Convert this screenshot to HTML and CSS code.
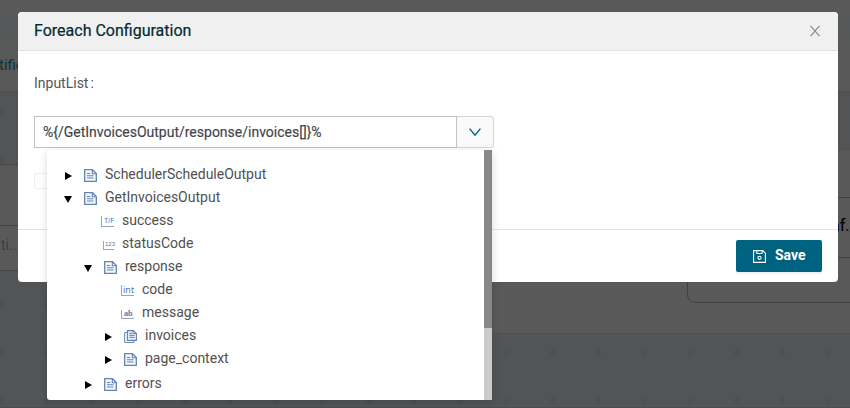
FILE: index.html
```html
<!DOCTYPE html>
<html lang="en">
<head>
<meta charset="utf-8">
<title>Foreach Configuration</title>
<link rel="stylesheet" href="styles.css">
</head>
<body>
<svg class="defs" width="0" height="0">
  <symbol id="doc" viewBox="0 0 13 13"><path d="M.7.7h7.8l3.8 3.8v7.8H.7z" fill="#f4f7fc" stroke="#6283b5" stroke-width="1.3"/><path d="M8.3.8v3.9h4M3 4.5h3.2M3 6.7h6.5M3 9h6.5" fill="none" stroke="#6283b5" stroke-width="1.1"/></symbol>
  <symbol id="docs" viewBox="0 0 13 13"><path d="M3.4.6h6l3 2.8v7H3.4z" fill="#e8eef8" stroke="#6283b5" stroke-width="1.1"/><path d="M3.2 2.6H.7v9.8h9.2v-2M5.3 3.4h3M5.3 5.4h5.2M5.3 7.4h5.2M9.2.8v2.8h3" fill="none" stroke="#6283b5"/></symbol>
</svg>
<div class="canvas">
  <div class="topbar"></div>
  <div class="subbar"></div>
  <div class="tabs"><span>tific</span></div>
  <div class="node node-left"><div class="node-row">ti...</div></div>
  <div class="node node-right"><div class="node-group"></div><div class="node-value"><span>af.</span></div></div>
  <div class="baseline"></div>
</div>
<section class="modal">
  <header class="modal-header">
    <h1>Foreach Configuration</h1>
    <svg class="close" width="10" height="12" viewBox="0 0 10 12"><path d="M.5.8l9 10.4M9.5.8l-9 10.4" stroke="#858585" stroke-width="1.1"/></svg>
  </header>
  <div class="modal-body">
    <div class="label">InputList<span>:</span></div>
    <div class="field">
      <div class="input">%{/GetInvoicesOutput/response/invoices[]}%</div>
      <div class="toggle"><svg width="12" height="8" viewBox="0 0 12 8"><path d="M.6.6L6 7.2 11.4.6" fill="none" stroke="#006281" stroke-width="1.4"/></svg></div>
    </div>
    <div class="ghost"></div>
  </div>
  <footer class="modal-footer">
    <div class="save">
      <svg width="13" height="13" viewBox="0 0 13 13" fill="none" stroke="#fff" stroke-width="1.1"><path d="M.6.6h9.2l2.6 2.6v9.2H.6zM3.8.7v2.8h5.3V.7"/><circle cx="6.5" cy="7.8" r="1.6"/></svg>
      <span>Save</span>
    </div>
  </footer>
</section>
<div class="dropdown">
  <div class="tree">
    <div class="row l1"><i class="arrow"></i><svg class="doc"><use href="#doc"/></svg><span>SchedulerScheduleOutput</span></div>
    <div class="row l1"><i class="arrow open"></i><svg class="doc"><use href="#doc"/></svg><span>GetInvoicesOutput</span></div>
    <div class="row leaf2"><b class="type bool">T/F</b><span>success</span></div>
    <div class="row leaf2"><b class="type num">123</b><span>statusCode</span></div>
    <div class="row l2"><i class="arrow open"></i><svg class="doc"><use href="#doc"/></svg><span>response</span></div>
    <div class="row leaf3"><b class="type int">int</b><span>code</span></div>
    <div class="row leaf3"><b class="type str">ab</b><span>message</span></div>
    <div class="row l3"><i class="arrow"></i><svg class="doc"><use href="#docs"/></svg><span>invoices</span></div>
    <div class="row l3"><i class="arrow"></i><svg class="doc"><use href="#doc"/></svg><span>page_context</span></div>
    <div class="row l2 last"><i class="arrow"></i><svg class="doc"><use href="#doc"/></svg><span>errors</span></div>
  </div>
  <div class="scrollbar"><div class="thumb"></div></div>
</div>
</body>
</html>
```
FILE: styles.css
```css
* { box-sizing: border-box; }
body { margin: 0; width: 850px; height: 408px; overflow: hidden; font-family: Roboto, "Liberation Sans", sans-serif; font-size: 14px; position: relative; }
.defs { position: absolute; }
.canvas { position: relative; width: 850px; height: 408px; overflow: hidden; background: #525456 radial-gradient(circle, #4e5052 2.5px, transparent 3.8px) -22.3px -7.3px / 46px 48px; }
.topbar { height: 12px; background: #595959; }
.subbar { height: 29px; background: #555959; }
.tabs { height: 50px; background: #595959; box-shadow: 0 1px 3px #4c4e50; color: #0a343c; font-size: 15px; line-height: 49px; }
.tabs span { display: block; width: 20px; margin-left: -1px; }
.node { position: absolute; background: #595959; }
.node-left { left: -10px; top: 164px; width: 200px; height: 107px; border-top: 1px solid #454545; padding-top: 60px; }
.node-row { height: 46px; border: solid #454545; border-width: 1px 0; padding-left: 11px; color: #3d3d3d; line-height: 38px; }
.node-right { left: 480px; top: 151px; width: 380px; height: 183px; border-bottom: 1px solid #505152; }
.node-group { position: absolute; left: 207px; top: 46px; width: 200px; height: 106px; border: 1px solid #404040; border-radius: 8px; }
.node-value { position: absolute; left: 350px; top: 46px; width: 40px; height: 61px; border: solid #404040; border-width: 1px 0; color: #000; font-size: 16px; line-height: 56px; }
.node-value span { margin-left: 1px; -webkit-text-stroke: .2px #000; }
.baseline { position: absolute; left: 0; right: 0; bottom: 0; height: 1px; background: #4b4c4e; }

.modal { position: absolute; left: 18px; top: 12px; width: 820px; height: 270px; background: #fff; border-radius: 4px; overflow: hidden; display: flex; flex-direction: column; }
.modal-header { height: 39px; background: #f0f0f0; border-bottom: 1px solid #e3e3e3; display: flex; align-items: center; justify-content: space-between; padding: 0 18px 0 16px; }
h1 { margin: 0; font-size: 16px; line-height: 20px; font-weight: 400; color: #032a33; -webkit-text-stroke: .2px #032a33; }
.modal-body { height: 178px; padding: 22px 16px 0; }
.label { height: 20px; line-height: 20px; color: #54565b; }
.label span { margin-left: 2px; }
.field { display: flex; width: 460px; height: 32px; margin-top: 23px; }
.input { width: 423px; border: 1px solid #c2c2c2; padding-left: 8px; line-height: 30px; color: #41444a; -webkit-text-stroke: .15px #41444a; white-space: nowrap; }
.toggle { width: 37px; border: 1px solid #d6d6d6; border-left: 0; border-radius: 0 3px 3px 0; background: #fafafa; display: flex; align-items: center; justify-content: center; }
.ghost { width: 40px; height: 16px; margin-top: 25px; border: 1px solid #efefef; border-radius: 2px; }
.modal-footer { height: 53px; border-top: 1px solid #e3e3e3; display: flex; justify-content: flex-end; padding: 10px 16px 0 0; }
.save { width: 86px; height: 32px; border-radius: 2px; background: #006281; box-shadow: 0 2px 1px #f0f0f0; color: #fff; font-weight: 700; display: flex; align-items: center; padding-left: 17px; gap: 9px; line-height: 30px; }
.save span { height: 32px; }

.dropdown { position: absolute; left: 47px; top: 150px; width: 445px; height: 250px; background: #fff; border-radius: 3px 0 0 3px; box-shadow: 0 2px 8px rgba(0,0,0,.15); display: flex; justify-content: space-between; }
.tree { padding-top: 13px; color: #505050; }
.row { height: 23px; display: flex; align-items: center; line-height: 23px; white-space: nowrap; }
.row.last { margin-top: 2px; }
.l1 { padding-left: 17px; }
.l2 { padding-left: 37px; }
.l3 { padding-left: 57px; }
.leaf2 { padding-left: 54px; }
.leaf3 { padding-left: 74px; }
.arrow { width: 9px; display: flex; margin-top: 3px; }
.arrow::before { content: ""; margin-left: 1px; border: solid transparent; border-width: 4px 0 4px 7px; border-left-color: #000; }
.arrow.open::before { margin-left: 0; border-width: 7px 4px 0; border-color: #000 transparent transparent; }
.doc { width: 13px; height: 13px; margin: 1px 8px 0 11px; }
.type { width: 13px; height: 11px; margin-right: 8px; border: solid #8fa6c8; border-width: 0 0 1px 1px; color: #5277ae; font: 400 7px/9px "Liberation Sans", sans-serif; padding-left: 2px; margin-top: 2px; }
.num { width: 11px; height: 9px; margin-left: 2px; margin-top: 4px; font-size: 6px; line-height: 7px; padding-left: 1px; }
.int { font: 9px/9px "Noto Sans", sans-serif; padding-left: 1px; }
.str { height: 9px; font: 700 8px/7px "Liberation Serif", serif; margin-top: 4px; }
.scrollbar { width: 8px; background: #cbcbcb; }
.thumb { height: 178px; background: #888; }
```
